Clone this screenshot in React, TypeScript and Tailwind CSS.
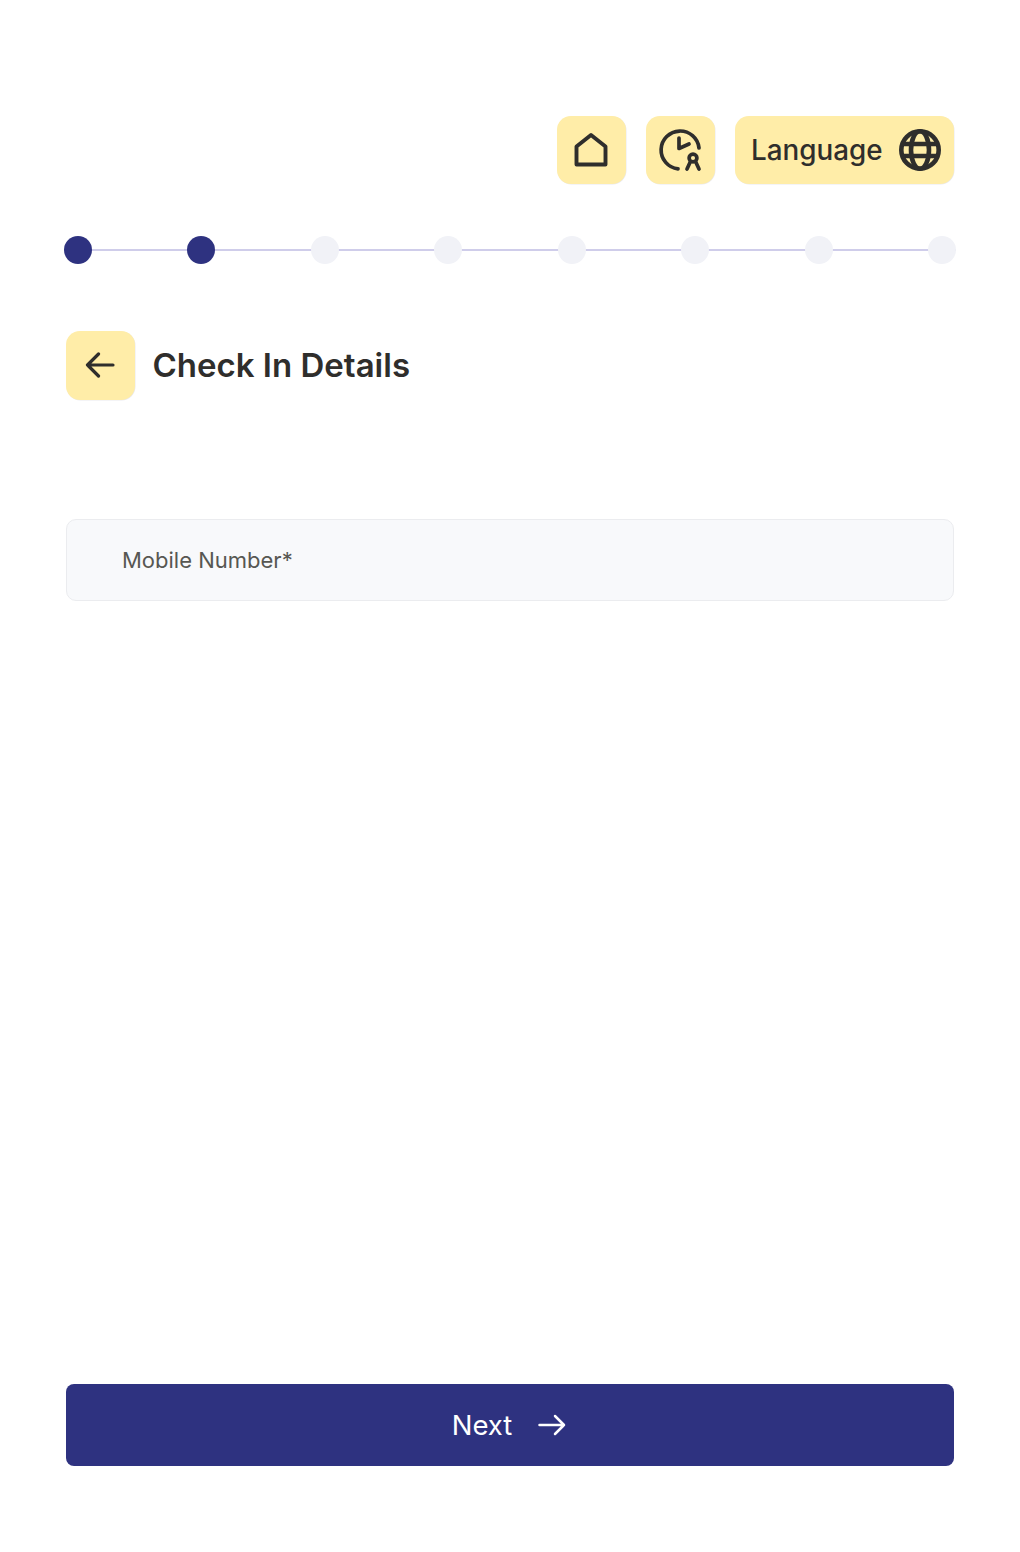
const steps = [true, true, false, false, false, false, false, false];

function HomeIcon() {
    return (
        <svg width="36" height="36" viewBox="0 0 36 36" fill="none" stroke="#2f2e2c" strokeWidth="3.9" strokeLinejoin="round" strokeLinecap="round">
            <path d="M3.5 14.5 18 3 32.5 14.5V32.5H3.5Z" />
        </svg>
    );
}

function ClockBadgeIcon() {
    return (
        <svg width="44" height="44" viewBox="0 0 44 44" fill="none" stroke="#2f2e2c" strokeWidth="3.7" strokeLinecap="round" strokeLinejoin="round">
            <path d="M41 20A19 19 0 1 0 20 40.9" />
            <path d="M21 10V20.5L31 16" />
            <circle cx="35" cy="30" r="3.9" />
            <path d="M32 34.5 29 41M38 34.5 41 41" />
        </svg>
    );
}

function GlobeIcon() {
    return (
        <svg width="42" height="42" viewBox="0 0 42 42" fill="none" stroke="#2f2e2c" strokeWidth="4.6">
            <circle cx="21" cy="21" r="18.7" />
            <ellipse cx="21" cy="21" rx="9" ry="18.7" />
            <path d="M3.5 15H38.5M3.5 27H38.5" />
        </svg>
    );
}

function BackArrow() {
    return (
        <svg width="30" height="26" viewBox="0 0 30 26" fill="none" stroke="#2f2e2c" strokeWidth="3.2" strokeLinecap="round" strokeLinejoin="round">
            <path d="M28 13H2.5M13.5 2 2.5 13 13.5 24" />
        </svg>
    );
}

function NextArrow() {
    return (
        <svg width="30" height="22" viewBox="0 0 30 22" fill="none" stroke="#ffffff" strokeWidth="2.5" strokeLinecap="round" strokeLinejoin="round">
            <path d="M1.5 11H26M17 2 26 11 17 20" />
        </svg>
    );
}

export default function App() {
    return (
        <div className="w-[1020px] h-[1552px] bg-white flex flex-col px-[66px] pt-[115.5px] font-['Inter',sans-serif] text-[#2f2e2c]">
            <div className="flex justify-end gap-[20.5px]">
                <button className="flex h-[68.5px] w-[68.5px] items-center justify-center rounded-[14px] bg-[#ffeda8] shadow-[0.5px_0.5px_0_#e9e9ee]">
                    <HomeIcon />
                </button>
                <button className="flex h-[68.5px] w-[68.5px] items-center justify-center rounded-[14px] bg-[#ffeda8] shadow-[0.5px_0.5px_0_#e9e9ee]">
                    <ClockBadgeIcon />
                </button>
                <button className="flex h-[68.5px] w-[219px] items-center justify-between rounded-[14px] bg-[#ffeda8] pl-[16px] pr-[13px] shadow-[0.5px_0.5px_0_#e9e9ee]">
                    <span className="pt-[2px] text-[27.8px] font-medium leading-none">Language</span>
                    <GlobeIcon />
                </button>
            </div>

            <div className="relative -mx-[2px] mt-[52px] flex justify-between">
                <div className="absolute left-0 right-0 top-[13px] h-[1.5px] bg-[#cfcdea]" />
                {steps.map((done, i) => (
                    <div key={i} className={`relative h-7 w-7 rounded-full ${done ? "bg-[#2e3280]" : "bg-[#f1f2f7]"}`} />
                ))}
            </div>

            <div className="mt-[67px] flex items-center gap-[18px]">
                <button className="flex h-[68.5px] w-[68.5px] items-center justify-center rounded-[14px] bg-[#ffeda8] shadow-[0.5px_0.5px_0_#e9e9ee]">
                    <BackArrow />
                </button>
                <h1 className="text-[33px] font-semibold leading-none">Check In Details</h1>
            </div>

            <div className="mt-[119.5px] flex h-[82px] items-center rounded-[10px] border border-[#ebecef] bg-[#f8f9fb] pl-[55px]">
                <span className="text-[22px] text-[#575752]">Mobile Number*</span>
            </div>

            <button className="mt-[783px] flex h-[82px] items-center justify-center gap-[26px] rounded-[8px] bg-[#2e3280] text-white">
                <span className="pt-[1px] text-[27.5px] leading-none">Next</span>
                <NextArrow />
            </button>
        </div>
    );
}
